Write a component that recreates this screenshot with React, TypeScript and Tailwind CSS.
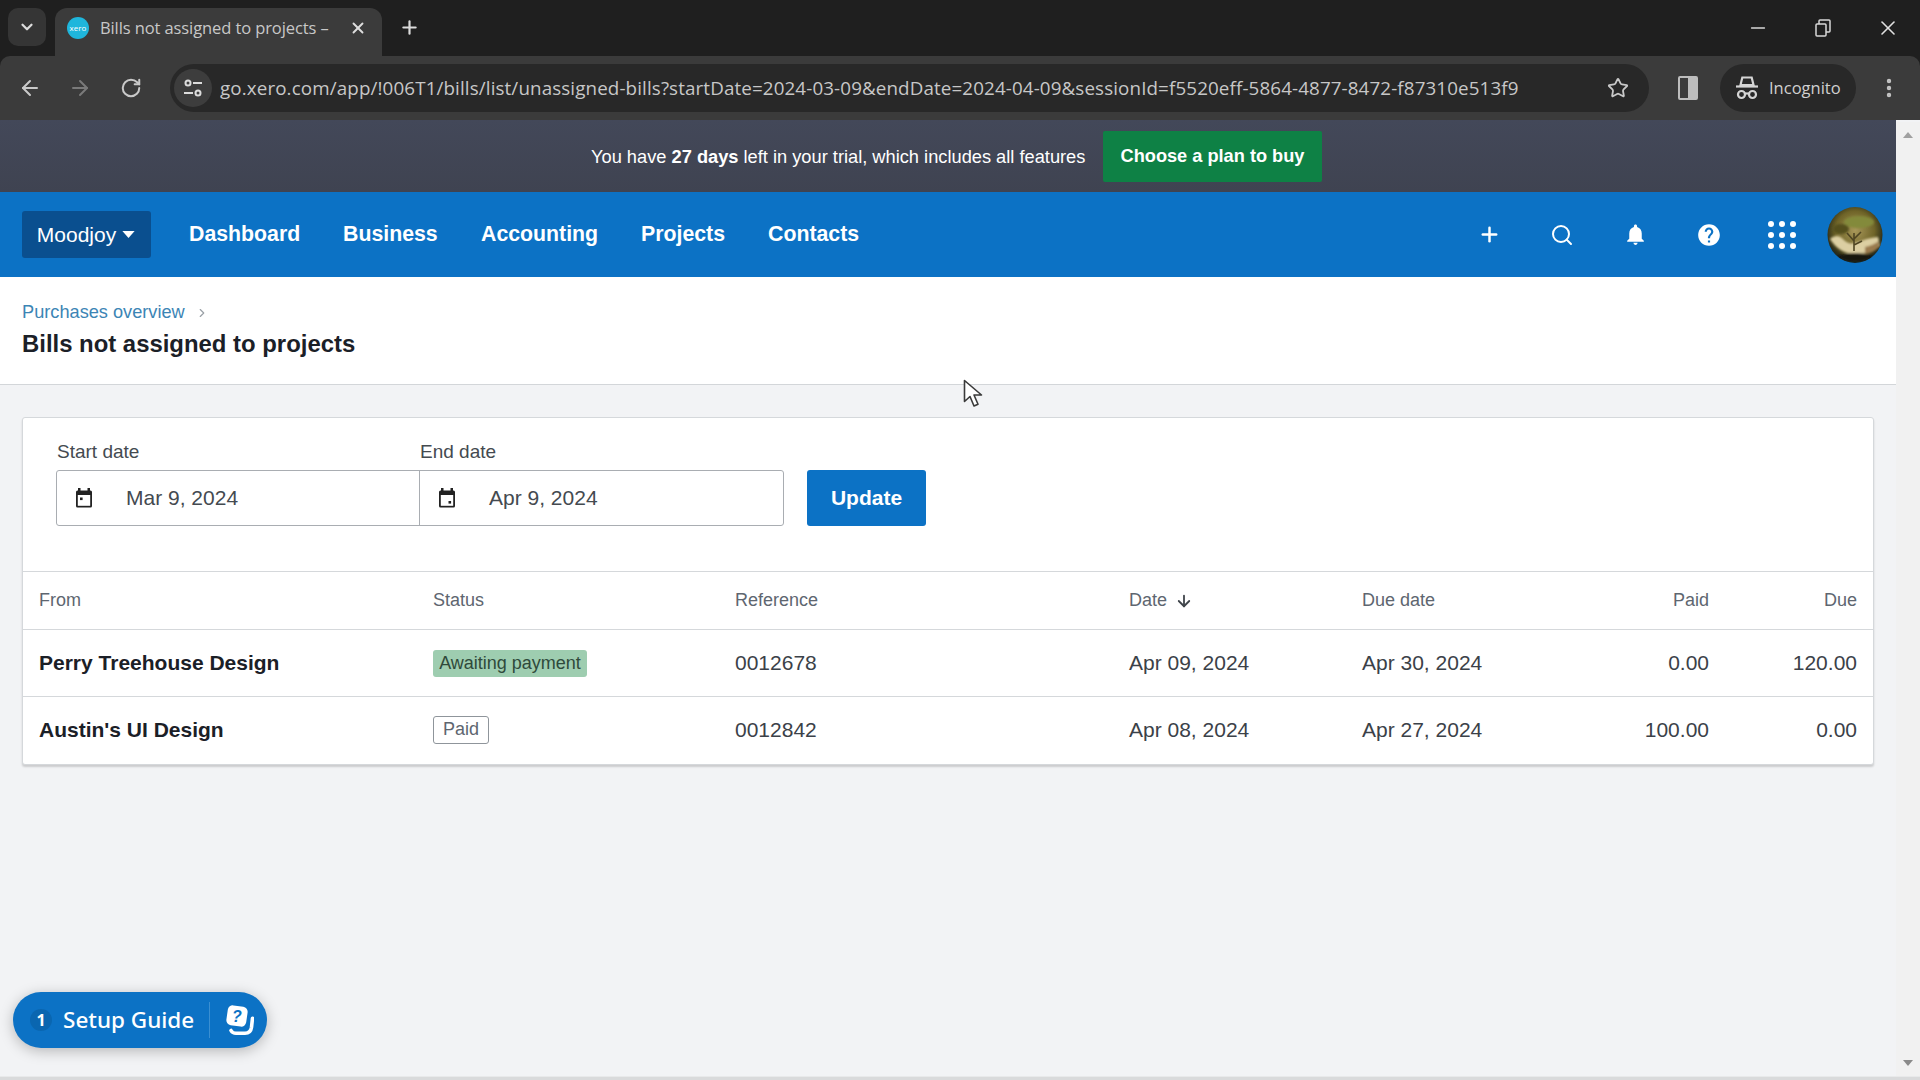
import React from 'react';
import { ArrowLeft, ArrowRight, ArrowDown, ChevronDown, ChevronRight, Plus, RotateCw, Search, Star, X, Minus, MoreVertical } from 'lucide-react';
import { MdHelp, MdNotifications } from 'react-icons/md';

const NAV_ITEMS = [
  { label: 'Dashboard', className: 'w-[154px]' },
  { label: 'Business', className: 'w-[138px]' },
  { label: 'Accounting', className: 'w-[160px]' },
  { label: 'Projects', className: 'w-[127px]' },
  { label: 'Contacts', className: 'w-[120px]' },
];

const ROWS = [
  { from: 'Perry Treehouse Design', status: 'awaiting', reference: '0012678', date: 'Apr 09, 2024', due: 'Apr 30, 2024', paid: '0.00', owing: '120.00', rowClass: 'h-[67px] border-b border-[#d5d8db]' },
  { from: "Austin's UI Design", status: 'paid', reference: '0012842', date: 'Apr 08, 2024', due: 'Apr 27, 2024', paid: '100.00', owing: '0.00', rowClass: 'h-[65px]' },
];

const COLUMNS = 'grid grid-cols-[394px_302px_394px_233px_1fr_148px] items-center px-4';

const CalendarIcon = ({ dot }: { dot: 'left' | 'right' }) => (
  <svg width="20" height="22" viewBox="0 0 20 22" className="shrink-0">
    <rect x="4" y="1" width="2.5" height="4" fill="#222" />
    <rect x="13.5" y="1" width="2.5" height="4" fill="#222" />
    <rect x="2" y="3.5" width="16" height="17" rx="1.5" fill="#222" />
    <rect x="3.8" y="8" width="12.4" height="10.8" fill="#fff" />
    <rect x={dot === 'left' ? 6 : 11.5} y={dot === 'left' ? 10.5 : 14} width="2.6" height="2.6" fill="#222" />
  </svg>
);

const DateField = ({ value, dot, last }: { value: string; dot: 'left' | 'right'; last?: boolean }) => (
  <div className={`w-[364px] h-full flex items-center pl-[17px] ${last ? '' : 'border-r border-[#a9adb2]'}`}>
    <CalendarIcon dot={dot} />
    <span className="ml-[32px] text-[21px] text-[#444a50]">{value}</span>
  </div>
);

const Avatar = () => (
  <svg width="56" height="56" viewBox="0 0 56 56">
    <defs>
      <radialGradient id="globe" cx="50%" cy="42%" r="58%">
        <stop offset="0%" stopColor="#a9985a" />
        <stop offset="60%" stopColor="#6f6428" />
        <stop offset="88%" stopColor="#2e2e18" />
        <stop offset="100%" stopColor="#15282c" />
      </radialGradient>
      <filter id="soft">
        <feGaussianBlur stdDeviation="1.2" />
      </filter>
    </defs>
    <clipPath id="round">
      <ellipse cx="28" cy="28" rx="27.5" ry="28" />
    </clipPath>
    <g clipPath="url(#round)">
      <rect width="56" height="56" fill="url(#globe)" />
      <g filter="url(#soft)">
        <ellipse cx="32" cy="15" rx="15" ry="6" fill="#838a3a" />
        <ellipse cx="14" cy="22" rx="8" ry="5" fill="#55501f" />
        <path d="M3 32c6-5 10-3 14 1 3 3 7 4 10 3 6-1 12-5 24-6l2 9c-6 5-14 8-24 8-12 0-20-6-26-15z" fill="#dccfa2" />
        <path d="M38 40c5-1 10-3 14-6v6c-4 4-8 6-14 7z" fill="#9a7a4e" />
        <path d="M10 50c10 6 26 6 36 0-8-5-28-5-36 0z" fill="#14120c" />
      </g>
      <path d="M27 44V26M27 34l-7-8M27 32l7-7M27 38l8-4" stroke="#4f4522" strokeWidth="1.6" fill="none" />
    </g>
  </svg>
);

const Cursor = () => (
  <svg width="20" height="29" viewBox="0 0 20 29" className="absolute left-[963px] top-[379px]">
    <path d="M1.5 1.5v21l5.5-5 4 9.5 4-1.8-4-9.2h7.5z" fill="#fff" stroke="#3a3a3a" strokeWidth="1.6" strokeLinejoin="round" />
  </svg>
);

const IncognitoIcon = () => (
  <svg width="24" height="26" viewBox="0 0 24 26" fill="none" stroke="#d5d5d5" strokeWidth="2.2">
    <path d="M5.5 10l1.8-7.5h9.4L18.500 10z" fill="none" />
    <path d="M1 11.500h22" />
    <circle cx="6.500" cy="19.500" r="3.500" />
    <circle cx="17.500" cy="19.500" r="3.500" />
    <path d="M10 18.500h4" />
  </svg>
);

const SetupIcon = () => (
  <svg width="30" height="32" viewBox="0 0 30 32">
    <path d="M7 26.500c1 1.800 2.500 2.800 5 2.800h9c3.800 0 6-2.300 6.500-6l1-9" fill="none" stroke="#fff" strokeWidth="3.600" strokeLinecap="round" />
    <rect x="3" y="2" width="20" height="20" rx="5" fill="#fff" transform="rotate(8 13 12)" />
    <text x="13" y="18" textAnchor="middle" className="text-[16px] font-bold italic" fill="#0c72c5" fontFamily="'Liberation Sans', sans-serif">?</text>
  </svg>
);

export default function App() {
  return (
    <div className="relative w-[1920px] h-[1080px] overflow-hidden flex flex-col bg-[#f2f3f5] font-['Liberation_Sans',Arial,sans-serif]">
      {/* browser frame */}
      <div className="shrink-0 bg-[#1f1f1f] font-['Open_Sans',sans-serif]">
        <div className="h-[56px] flex items-end pl-2">
          <div className="w-[38px] h-[38px] mb-[10px] rounded-[10px] bg-[#353535] flex items-center justify-center">
            <ChevronDown size={18} strokeWidth={3} className="text-[#dcdcdc]" />
          </div>
          <div className="ml-[9px] w-[327px] h-[48px] rounded-t-[12px] bg-[#3b3b3b] flex items-center pl-[12px] pr-[15px] pb-[8px]">
            <div className="w-[22px] h-[22px] rounded-full bg-[#1fb6dc] flex items-center justify-center text-[8px] leading-none text-white shrink-0">xero</div>
            <span className="ml-[11px] text-[16.5px] text-[#c8c8c8] tracking-[-0.1px] whitespace-nowrap overflow-hidden flex-1">Bills not assigned to projects –</span>
            <X size={18} strokeWidth={2.5} className="text-[#dedede] shrink-0" />
          </div>
          <Plus size={21} strokeWidth={2.5} className="ml-[17px] mb-[18px] text-[#dcdcdc]" />
          <div className="flex-1" />
          <div className="flex items-center mb-[16px]">
            <div className="w-[65px] flex justify-center"><Minus size={22} strokeWidth={1.5} className="text-[#d8d8d8]" /></div>
            <div className="w-[65px] flex justify-center">
              <svg width="16" height="18" viewBox="0 0 16 18" fill="none" stroke="#d8d8d8" strokeWidth="1.5">
                <rect x="1" y="5" width="10" height="12" rx="1" />
                <path d="M4 5V2a1 1 0 0 1 1-1h9a1 1 0 0 1 1 1v10a1 1 0 0 1-1 1h-3" />
              </svg>
            </div>
            <div className="w-[65px] flex justify-center"><X size={24} strokeWidth={1.6} className="text-[#e0e0e0]" /></div>
          </div>
        </div>

        <div className="h-[64px] bg-[#3b3b3b] rounded-t-[10px] flex items-center pl-[18px]">
          <ArrowLeft size={24} strokeWidth={2} className="text-[#c9c9c9]" />
          <ArrowRight size={24} strokeWidth={2} className="ml-[26px] text-[#7a7a7a]" />
          <RotateCw size={22} strokeWidth={2.2} className="ml-[28px] text-[#c9c9c9]" />
          <div className="ml-[28px] w-[1479px] h-[48px] rounded-full bg-[#282828] flex items-center pl-[4px] pr-[20px]">
            <div className="w-[38px] h-[38px] rounded-full bg-[#3d3d3d] flex items-center justify-center">
              <svg width="20" height="20" viewBox="0 0 20 20" fill="none" stroke="#dcdcdc" strokeWidth="2">
                <circle cx="5" cy="5" r="2.5" />
                <path d="M10 5h9M1 15h9" />
                <circle cx="15" cy="15" r="2.5" />
              </svg>
            </div>
            <span className="ml-[8px] flex-1 text-[18.8px] text-[#c7c7c7] tracking-[0.12px] whitespace-nowrap overflow-hidden">
              go.xero.com/app/!006T1/bills/list/unassigned-bills?startDate=2024-03-09&amp;endDate=2024-04-09&amp;sessionId=f5520eff-5864-4877-8472-f87310e513f9
            </span>
            <Star size={22} strokeWidth={2} className="text-[#c9c9c9]" />
          </div>
          <div className="ml-[29px] w-[20px] h-[24px] border-2 border-[#bdbdbd] rounded-[2px] flex justify-end">
            <div className="w-[8px] bg-[#bdbdbd]" />
          </div>
          <div className="ml-[22px] w-[136px] h-[48px] rounded-full bg-[#282828] flex items-center pl-[15px]">
            <IncognitoIcon />
            <span className="ml-[10px] text-[16.5px] text-[#d0d0d0]">Incognito</span>
          </div>
          <MoreVertical size={24} strokeWidth={2.4} className="ml-[21px] text-[#c4c4c4]" />
        </div>
      </div>

      <div className="flex-1 min-h-0 flex">
        <div className="w-[1896px] flex flex-col">
          {/* trial banner */}
          <div className="h-[72px] shrink-0 bg-gradient-to-b from-[#434859] to-[#3f4351] flex items-center pl-[591px]">
            <p className="text-[18.25px] text-white w-[512px] whitespace-nowrap pt-px">
              You have <span className="font-bold">27 days</span> left in your trial, which includes all features
            </p>
            <button className="w-[219px] h-[51px] pt-[2px] bg-[#0e8145] text-white text-[18.2px] font-bold rounded-[2px]">Choose a plan to buy</button>
          </div>

          {/* nav */}
          <div className="h-[85px] shrink-0 bg-[#0c72c5] flex items-center pl-[22px]">
            <button className="w-[129px] h-[47px] pr-px bg-[#0a4f8f] rounded-[3px] flex items-center justify-center text-[21px] text-white">
              Moodjoy
              <svg width="13" height="7" viewBox="0 0 14 8" className="ml-[6px]">
                <path d="M0 0h14L7 8z" fill="#fff" />
              </svg>
            </button>
            <div className="ml-[38px] flex items-center pt-px">
              {NAV_ITEMS.map((item) => (
                <span key={item.label} className={`${item.className} text-[21.3px] font-bold text-white whitespace-nowrap`}>{item.label}</span>
              ))}
            </div>
            <div className="flex-1" />
            <div className="flex items-center pr-[13px]">
              <div className="w-[72px] flex justify-center"><Plus size={23} strokeWidth={2.6} className="text-white" /></div>
              <div className="w-[74px] flex justify-center"><Search size={24} strokeWidth={2} className="text-white" /></div>
              <div className="w-[73px] flex justify-center"><MdNotifications size={25} className="text-white" /></div>
              <div className="w-[73px] flex justify-center"><MdHelp size={26} className="text-white" /></div>
              <div className="w-[72px] grid grid-cols-3 gap-[5px] pl-[23px] pr-[21px]">
                {Array.from({ length: 9 }).map((_, i) => (
                  <span key={i} className="w-[6px] h-[6px] rounded-full bg-white" />
                ))}
              </div>
              <div className="ml-[10px]"><Avatar /></div>
            </div>
          </div>

          {/* page header */}
          <div className="h-[108px] shrink-0 bg-white border-b border-[#d3d6d9] pl-[22px] pt-[26px]">
            <div className="flex items-center h-[20px] text-[18.2px] text-[#3c85b5]">
              Purchases overview
              <ChevronRight size={14} className="ml-[10px] text-[#9aa0a6]" />
            </div>
            <h1 className="mt-[6px] text-[23.9px] leading-[30px] font-bold text-[#1b2027]">Bills not assigned to projects</h1>
          </div>

          {/* card */}
          <div className="ml-[22px] mt-[32px] w-[1852px] h-[348px] bg-white border border-[#d5d8db] rounded-[3px] shadow-[0_2px_2px_rgba(0,0,0,0.16)]">
            <div className="h-[153px] pl-[33px] pt-[23px]">
              <div className="flex h-[22px] items-center pl-px text-[19px] text-[#444a50]">
                <span className="w-[363px]">Start date</span>
                <span>End date</span>
              </div>
              <div className="mt-[7px] flex items-center">
                <div className="w-[728px] h-[56px] border border-[#a9adb2] rounded-[3px] flex">
                  <DateField value="Mar 9, 2024" dot="left" />
                  <DateField value="Apr 9, 2024" dot="right" last />
                </div>
                <button className="ml-[23px] w-[119px] h-[56px] bg-[#0c72c5] rounded-[3px] text-white text-[21px] font-bold">Update</button>
              </div>
            </div>

            <div className={`${COLUMNS} h-[59px] border-t border-b border-[#d5d8db] text-[18px] text-[#5e6670]`}>
              <span>From</span>
              <span>Status</span>
              <span>Reference</span>
              <span className="flex items-center">
                Date
                <ArrowDown size={18} strokeWidth={2.4} className="ml-[8px] text-[#3f444a]" />
              </span>
              <span className="flex justify-between">
                <span>Due date</span>
                <span>Paid</span>
              </span>
              <span className="text-right">Due</span>
            </div>

            {ROWS.map((row) => (
              <div key={row.reference} className={`${COLUMNS} ${row.rowClass} text-[21px] text-[#3b4148]`}>
                <span className="font-bold text-[#1b2027]">{row.from}</span>
                <span className="flex">
                  {row.status === 'awaiting' ? (
                    <span className="h-[27px] w-[154px] flex items-center justify-center rounded-[3px] bg-[#9ecdb0] text-[18px] text-[#2f4a3b]">Awaiting payment</span>
                  ) : (
                    <span className="h-[28px] w-[56px] flex items-center justify-center rounded-[3px] border border-[#8f959b] text-[18px] text-[#5e6670]">Paid</span>
                  )}
                </span>
                <span>{row.reference}</span>
                <span>{row.date}</span>
                <span className="flex justify-between">
                  <span>{row.due}</span>
                  <span>{row.paid}</span>
                </span>
                <span className="text-right">{row.owing}</span>
              </div>
            ))}
          </div>
        </div>

        {/* page scrollbar */}
        <div className="w-[24px] mt-[2px] bg-[#f1f1f1] flex flex-col items-center justify-between pt-[10px] pb-[10px]">
          <div className="w-0 h-0 border-x-[5px] border-x-transparent border-b-[6px] border-b-[#a0a0a0]" />
          <div className="w-0 h-0 border-x-[5px] border-x-transparent border-t-[6px] border-t-[#8a8a8a]" />
        </div>
      </div>

      <div className="h-[4px] shrink-0 bg-[#d9dadb] border-t border-[#e8e9ea]" />

      {/* setup guide */}
      <div className="absolute left-[13px] top-[992px] w-[254px] h-[56px] rounded-full bg-[#0c72c5] shadow-[0_3px_14px_rgba(0,0,0,0.25)] flex items-center pl-[17px] font-['Noto_Sans',sans-serif]">
        <div className="w-[22px] h-[22px] rounded-full bg-[#0a66b0] flex items-center justify-center text-[16px] font-bold text-white">1</div>
        <span className="ml-[11px] text-[22.5px] font-medium text-white whitespace-nowrap">Setup Guide</span>
        <div className="ml-[15px] w-px h-[36px] bg-[#3a8fd2]" />
        <div className="ml-[14px]"><SetupIcon /></div>
      </div>

      <Cursor />
    </div>
  );
}
